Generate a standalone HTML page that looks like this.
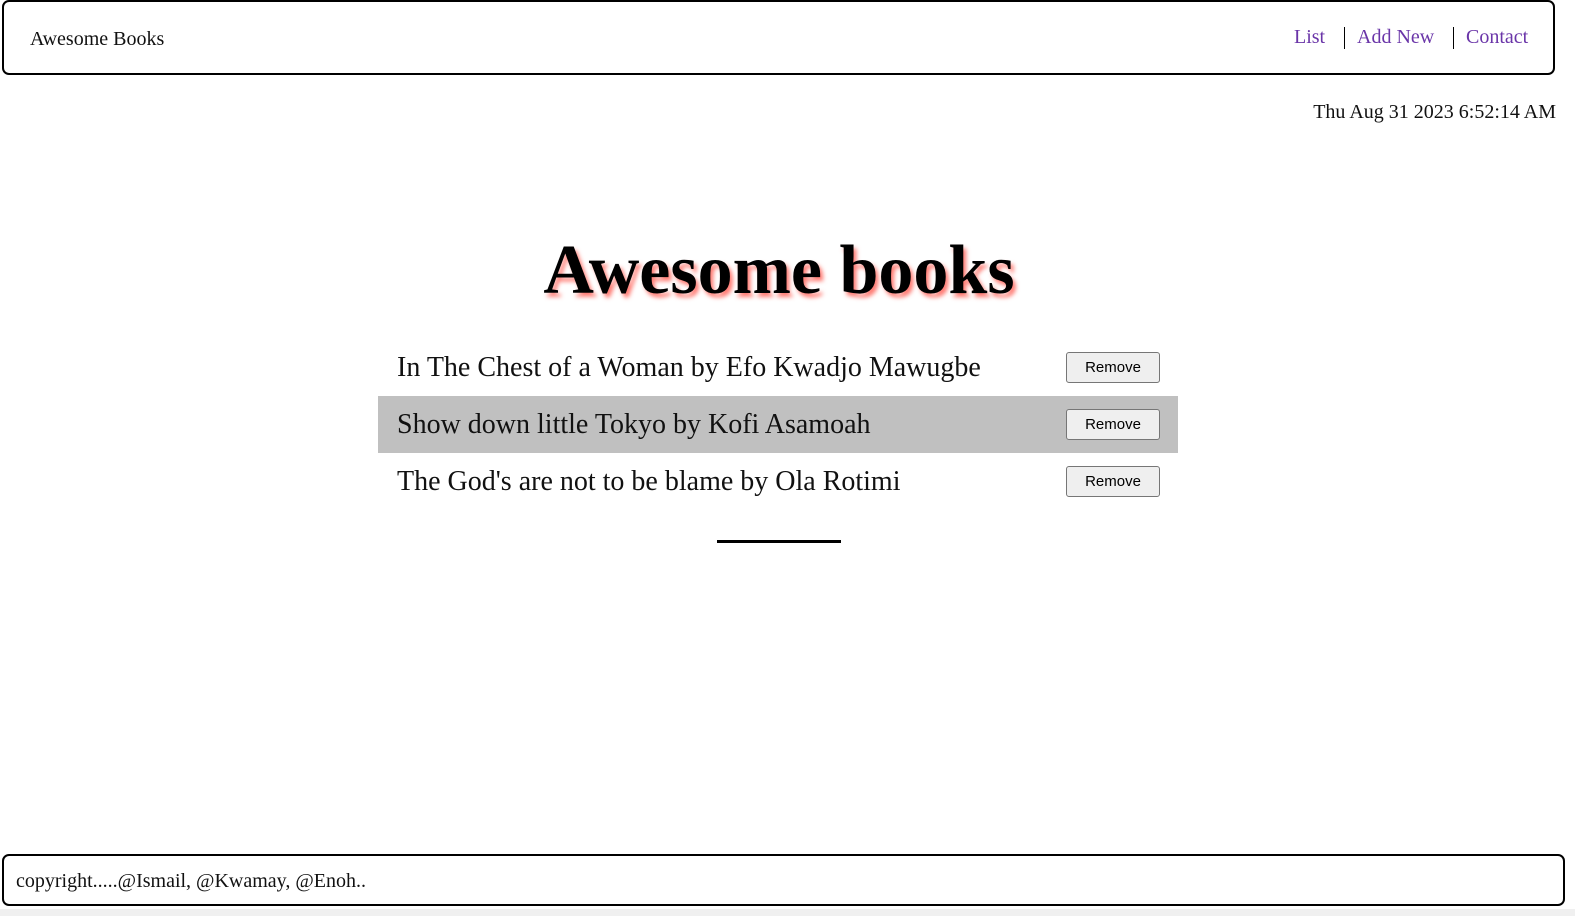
<!DOCTYPE html>
<html><head><meta charset="utf-8"><style>
html,body{margin:0;padding:0;width:1575px;height:916px;background:#fff;overflow:hidden;position:relative;font-family:"Liberation Serif",serif;color:#111}
.hdr{position:absolute;left:2px;top:0;width:1549px;height:71px;border:2px solid #000;border-radius:7px}
.brand{position:absolute;left:26px;top:26px;font-size:20px}
.nav{position:absolute;top:26px;font-size:20px;color:#6a35a8}
.sep{position:absolute;top:27px;width:1px;height:22px;background:#000}
.date{position:absolute;right:19px;top:101px;font-size:20px}
h1{position:absolute;left:0;width:1558px;top:229px;margin:0;text-align:center;font-size:70px;font-weight:bold;color:#000;text-shadow:3px 4px 4px rgba(255,80,70,.75);line-height:84px}
.row{position:absolute;left:378px;width:800px;height:57px}
.row span{position:absolute;left:19px;top:13px;font-size:28px;color:#111}
.row button{position:absolute;left:688px;top:13px;width:94px;height:31px;border:1px solid #767676;border-radius:3px;background:#efefef;font-family:"Liberation Sans",sans-serif;font-size:15px;color:#000;padding:0}
.line{position:absolute;left:717px;top:540px;width:124px;height:3px;background:#000}
.ftr{position:absolute;left:2px;top:854px;width:1559px;height:48px;border:2px solid #000;border-radius:7px}
.ftr span{position:absolute;left:12px;top:14px;font-size:20px}
.bar{position:absolute;left:0;top:909px;width:1575px;height:7px;background:#f0f0f0}
</style></head><body>
<div class="hdr"><div class="brand">Awesome Books</div></div>
<div class="nav" style="left:1294px">List</div>
<div class="sep" style="left:1344px"></div>
<div class="nav" style="left:1357px">Add New</div>
<div class="sep" style="left:1453px"></div>
<div class="nav" style="left:1466px">Contact</div>
<div class="date">Thu Aug 31 2023 6:52:14 AM</div>
<h1>Awesome books</h1>
<div class="row" style="top:339px"><span>In The Chest of a Woman by Efo Kwadjo Mawugbe</span><button>Remove</button></div>
<div class="row" style="top:396px;background:#c0c0c0"><span>Show down little Tokyo by Kofi Asamoah</span><button>Remove</button></div>
<div class="row" style="top:453px"><span>The God's are not to be blame by Ola Rotimi</span><button>Remove</button></div>
<div class="line"></div>
<div class="ftr"><span>copyright.....@Ismail, @Kwamay, @Enoh..</span></div>
<div class="bar"></div>
</body></html>
